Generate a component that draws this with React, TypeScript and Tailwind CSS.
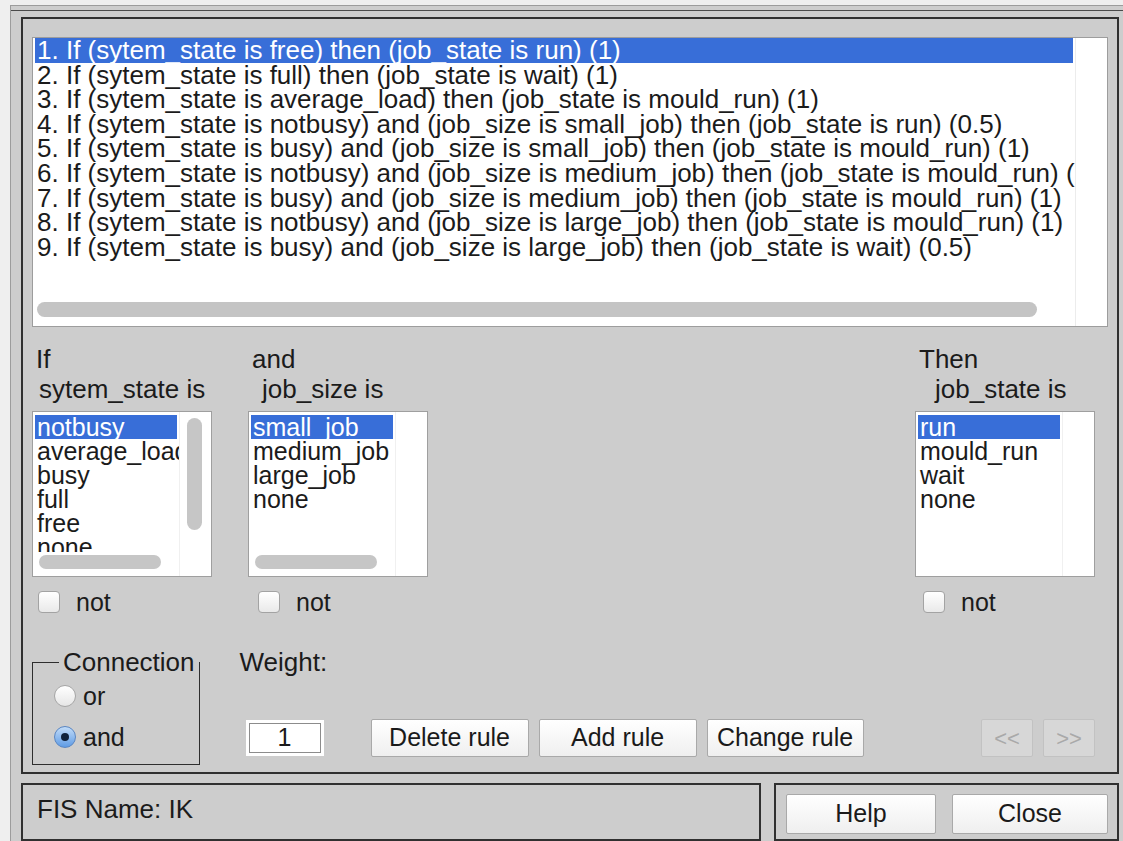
import type { ReactNode } from 'react';

const RULES = [
  '1. If (sytem_state is free) then (job_state is run) (1)',
  '2. If (sytem_state is full) then (job_state is wait) (1)',
  '3. If (sytem_state is average_load) then (job_state is mould_run) (1)',
  '4. If (sytem_state is notbusy) and (job_size is small_job) then (job_state is run) (0.5)',
  '5. If (sytem_state is busy) and (job_size is small_job) then (job_state is mould_run) (1)',
  '6. If (sytem_state is notbusy) and (job_size is medium_job) then (job_state is mould_run) (1)',
  '7. If (sytem_state is busy) and (job_size is medium_job) then (job_state is mould_run) (1)',
  '8. If (sytem_state is notbusy) and (job_size is large_job) then (job_state is mould_run) (1)',
  '9. If (sytem_state is busy) and (job_size is large_job) then (job_state is wait) (0.5)',
];

const SYSTEM_STATES = ['notbusy', 'average_load', 'busy', 'full', 'free', 'none'];
const JOB_SIZES = ['small_job', 'medium_job', 'large_job', 'none'];
const JOB_STATES = ['run', 'mould_run', 'wait', 'none'];

function Checkbox({ label }: { label: string }) {
  return (
    <div className="flex h-[24px] items-center">
      <span className="ml-[6px] h-[22px] w-[22px] rounded-[4px] border border-[#a3a3a3] bg-linear-to-b from-white to-[#e9e9e9]" />
      <span className="ml-[16px] text-[25px] leading-[24px]">{label}</span>
    </div>
  );
}

function Radio({ label, checked }: { label: string; checked?: boolean }) {
  return (
    <div className="flex h-[30px] items-center">
      {checked ? (
        <span className="flex h-[22px] w-[22px] items-center justify-center rounded-full border border-[#5a86c2] bg-linear-to-b from-[#c2dcf8] to-[#5e9be4]">
          <span className="h-[8px] w-[8px] rounded-full bg-[#10223c]" />
        </span>
      ) : (
        <span className="h-[22px] w-[22px] rounded-full border border-[#a6a6a6] bg-linear-to-b from-white to-[#e6e6e6]" />
      )}
      <span className="ml-[7px] text-[25px] leading-[24px]">{label}</span>
    </div>
  );
}

function Button({ children, width }: { children: ReactNode; width: string }) {
  return (
    <button
      className={`flex h-[38px] items-center justify-center rounded-[2px] border border-[#a9a9a9] bg-linear-to-b from-white to-[#efefef] text-[25px] text-[#1a1a1a] ${width}`}
    >
      {children}
    </button>
  );
}

// small list with a 32px strip for the vertical scroller on the right
function SmallList({
  items,
  thumbV,
  thumbH,
}: {
  items: string[];
  thumbV?: boolean;
  thumbH?: boolean;
}) {
  return (
    <div className="mt-[7px] flex h-[166px] w-[180px] border border-[#9f9f9f] bg-white">
      <div className="flex w-[146px] flex-col overflow-hidden">
        <div className="flex-1 overflow-hidden px-[2px] pt-[3px]">
          {items.map((item, i) => (
            <div
              key={item}
              className={`whitespace-nowrap pl-[2px] text-[25px] leading-[24px] ${
                i === 0 ? 'bg-[#386ed8] text-white' : ''
              }`}
            >
              {item}
            </div>
          ))}
        </div>
        <div className="h-[24px] px-[6px] pt-[3px]">
          {thumbH && <div className="h-[14px] w-[122px] rounded-full bg-[#c6c6c6]" />}
        </div>
      </div>
      <div className="flex-1 border-l border-[#f0f0f0] pt-[6px] pl-[7px]">
        {thumbV && <div className="h-[112px] w-[15px] rounded-full bg-[#c6c6c6]" />}
      </div>
    </div>
  );
}

function Column({
  first,
  second,
  indent,
  children,
}: {
  first: string;
  second: string;
  indent: string;
  children: ReactNode;
}) {
  return (
    <div className="flex w-[180px] flex-col">
      <div className="pl-[4px] text-[26px] leading-[30px]">{first}</div>
      <div className={`whitespace-nowrap text-[26px] leading-[30px] ${indent}`}>{second}</div>
      {children}
    </div>
  );
}

export default function App() {
  return (
    <div className="h-[841px] w-[1123px] overflow-hidden bg-[#efefef] font-['Liberation_Sans',Arial,sans-serif] text-[#1b1b1b]">
      <div className="ml-[10px] mt-[5px] h-[836px] border-l border-t border-[#9c9c9c] bg-[#cdcdcd]">
        <div className="mt-[4px] h-[831px] border-t border-[#4a4a4a] pl-[10px] pt-[6px]">
          {/* rule editor panel */}
          <div className="flex h-[757px] w-[1098px] flex-col border-2 border-[#303030] pl-[9px] pr-[9px] pt-[18px]">
            <div className="flex h-[290px] w-[1076px] border border-[#9d9d9d] bg-white">
              <div className="flex w-[1042px] flex-col overflow-hidden">
                <div className="flex-1 overflow-hidden px-[2px]">
                  {RULES.map((rule, i) => (
                    <div
                      key={rule}
                      className={`whitespace-nowrap pl-[2px] text-[26px] leading-[24.6px] ${
                        i === 0 ? 'bg-[#386ed8] text-white' : ''
                      }`}
                    >
                      {rule}
                    </div>
                  ))}
                </div>
                <div className="h-[30px] px-[4px] pt-[6px]">
                  <div className="h-[15px] w-[1000px] rounded-full bg-[#c4c4c4]" />
                </div>
              </div>
              <div className="flex-1 border-l border-[#ececec]" />
            </div>

            <div className="mt-[17px] flex pr-[13px]">
              <Column first="If" second="sytem_state is" indent="pl-[7px]">
                <SmallList items={SYSTEM_STATES} thumbV thumbH />
                <div className="mt-[13px]">
                  <Checkbox label="not" />
                </div>
              </Column>
              <div className="w-[36px]" />
              <Column first="and" second="job_size is" indent="pl-[14px]">
                <SmallList items={JOB_SIZES} thumbH />
                <div className="mt-[13px] pl-[4px]">
                  <Checkbox label="not" />
                </div>
              </Column>
              <div className="flex-1" />
              <Column first="Then" second="job_state is" indent="pl-[20px]">
                <SmallList items={JOB_STATES} />
                <div className="mt-[13px] pl-[2px]">
                  <Checkbox label="not" />
                </div>
              </Column>
            </div>

            <div className="mt-[35px] flex pr-[13px]">
              <fieldset className="h-[116px] w-[166px] border border-[#2e2e2e] pl-[21px]">
                <legend className="ml-[5px] px-[4px] text-[26px] leading-[26px]">Connection</legend>
                <div className="mt-[6px]">
                  <Radio label="or" />
                </div>
                <div className="mt-[11px]">
                  <Radio label="and" checked />
                </div>
              </fieldset>

              <div className="ml-[40px] flex flex-1 flex-col">
                <div className="text-[26px] leading-[26px]">Weight:</div>
                <div className="mt-[44px] flex items-center">
                  <div className="ml-[6px] bg-white p-[3px]">
                    <div className="flex h-[30px] w-[72px] items-center justify-center border border-[#8c8c8c] bg-white text-[25px]">
                      1
                    </div>
                  </div>
                  <div className="ml-[47px] flex gap-[10px]">
                    <Button width="w-[158px]">Delete rule</Button>
                    <Button width="w-[158px]">Add rule</Button>
                    <Button width="w-[157px]">Change rule</Button>
                  </div>
                  <div className="flex-1" />
                  <div className="flex gap-[10px]">
                    <button className="h-[38px] w-[52px] rounded-[2px] border border-[#c2c2c2] bg-[#d7d7d7] text-[22px] text-[#a9a9a9]">
                      &lt;&lt;
                    </button>
                    <button className="h-[38px] w-[52px] rounded-[2px] border border-[#c2c2c2] bg-[#d7d7d7] text-[22px] text-[#a9a9a9]">
                      &gt;&gt;
                    </button>
                  </div>
                </div>
              </div>
            </div>
          </div>

          {/* status and dialog buttons */}
          <div className="mt-[9px] flex gap-[13px]">
            <div className="h-[58px] w-[740px] border-2 border-[#303030] pl-[14px] pt-[10px] text-[26px] leading-[28px]">
              FIS Name: IK
            </div>
            <div className="flex h-[58px] w-[345px] gap-[16px] border-2 border-[#303030] pl-[10px] pt-[9px]">
              <Button width="w-[150px] !h-[40px]">Help</Button>
              <Button width="w-[156px] !h-[40px]">Close</Button>
            </div>
          </div>
        </div>
      </div>
    </div>
  );
}
